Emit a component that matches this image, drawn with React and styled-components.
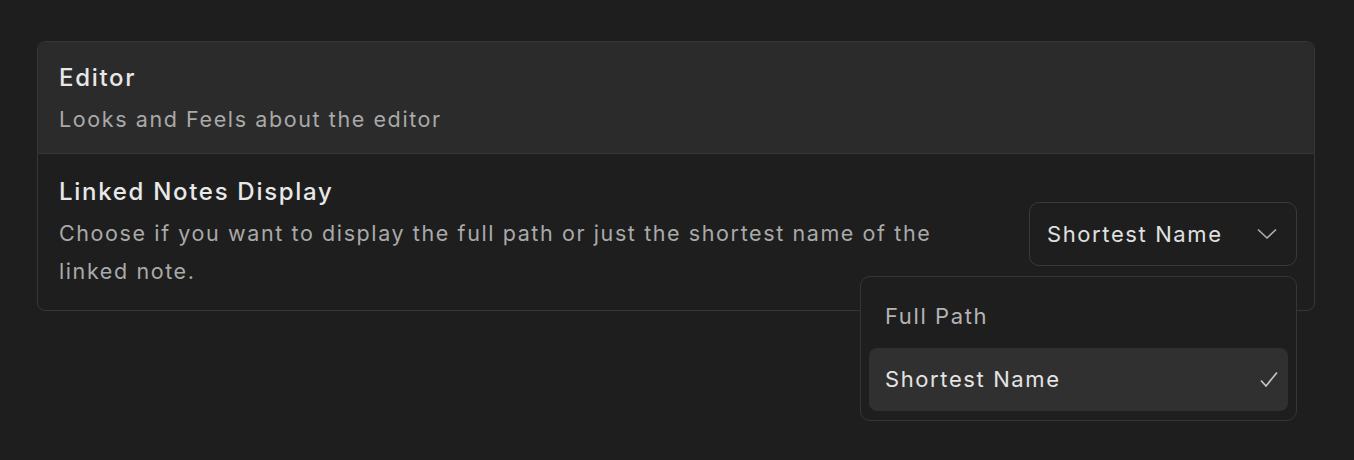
import React from "react";
import styled, { createGlobalStyle } from "styled-components";

const GlobalStyle = createGlobalStyle`
  html, body {
    margin: 0;
    background: #1e1e1e;
    font-family: Inter, "Noto Sans", sans-serif;
  }
`;

const Page = styled.div`
  padding: 41px 39px 0 37px;
  height: 460px;
  box-sizing: border-box;
`;

const Card = styled.div`
  border: 1px solid #363636;
  border-radius: 8px;
  background: #1e1e1e;
`;

const Header = styled.div`
  background: #2b2b2b;
  border-radius: 8px 8px 0 0;
  border-bottom: 1px solid #363636;
  padding: 21px 21px 15px;
`;

const Title = styled.div`
  font-size: 24px;
  line-height: 30px;
  font-weight: 500;
  letter-spacing: 1.7px;
  color: #e8e8e8;
`;

const Desc = styled.div`
  margin-top: 7px;
  font-size: 21.5px;
  line-height: 38px;
  letter-spacing: 1.6px;
  color: #a9a9a9;
  max-width: ${(p) => p.maxWidth || "none"};
`;

const Row = styled.div`
  display: flex;
  align-items: center;
  justify-content: space-between;
  padding: 23px 17px 20px 21px;
`;

const Info = styled.div`
  flex: 1;
`;

const SelectWrap = styled.div`
  position: relative;
`;

const SelectBox = styled.div`
  width: 268px;
  height: 64px;
  box-sizing: border-box;
  display: flex;
  align-items: center;
  justify-content: space-between;
  padding: 0 19px 0 17px;
  border: 1px solid #3a3a3a;
  border-radius: 10px;
  font-size: 22px;
  letter-spacing: 1.6px;
  color: #e0e0e0;
`;

const Menu = styled.div`
  position: absolute;
  top: 74px;
  right: 0;
  width: 437px;
  box-sizing: border-box;
  padding: 8px 8px 9px;
  background: #1e1e1e;
  border: 1px solid #363636;
  border-radius: 10px;
  z-index: 2;
`;

const Item = styled.div`
  height: 63px;
  display: flex;
  align-items: center;
  justify-content: space-between;
  padding: 0 10px 0 16px;
  border-radius: 8px;
  font-size: 22px;
  letter-spacing: 1.6px;
  background: ${(p) => (p.active ? "#303030" : "transparent")};
  color: ${(p) => (p.active ? "#e4e4e4" : "#b4b4b4")};
`;

const Chevron = () => (
  <svg width="20" height="12" viewBox="0 0 20 12" fill="none">
    <path d="M1 1.5 L10 10 L19 1.5" stroke="#b0b0b0" strokeWidth="1.6" />
  </svg>
);

const Check = () => (
  <svg width="18" height="17" viewBox="0 0 18 17" fill="none">
    <path d="M1 9.5 L6 15 L17 1.5" stroke="#c8c8c8" strokeWidth="1.6" />
  </svg>
);

export default function App() {
  const options = ["Full Path", "Shortest Name"];
  const selected = "Shortest Name";
  return (
    <>
      <GlobalStyle />
      <Page>
        <Card>
          <Header>
            <Title>Editor</Title>
            <Desc>Looks and Feels about the editor</Desc>
          </Header>
          <Row>
            <Info>
              <Title>Linked Notes Display</Title>
              <Desc maxWidth="900px">
                Choose if you want to display the full path or just the shortest name of the linked note.
              </Desc>
            </Info>
            <SelectWrap>
              <SelectBox>
                {selected}
                <Chevron />
              </SelectBox>
              <Menu>
                {options.map((o) => (
                  <Item key={o} active={o === selected}>
                    {o}
                    {o === selected && <Check />}
                  </Item>
                ))}
              </Menu>
            </SelectWrap>
          </Row>
        </Card>
      </Page>
    </>
  );
}
